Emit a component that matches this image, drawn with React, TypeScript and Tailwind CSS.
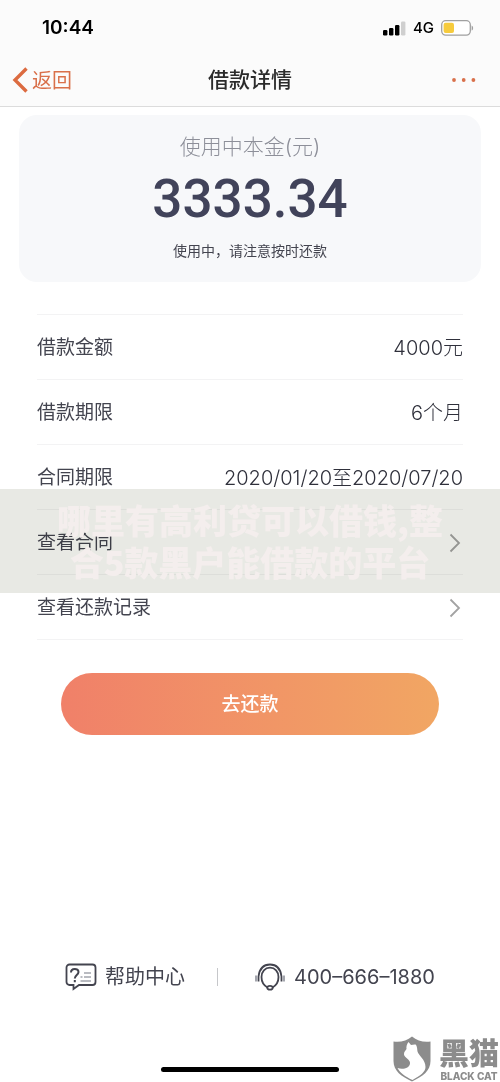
import type { ReactNode } from "react";

const Chevron = () => (
  <svg className="mr-0.5" width="12" height="20" viewBox="0 0 12 20" fill="none" stroke="#a3a3a3" strokeWidth="1.800" aria-hidden="true">
    <path d="M1.500 1.500l8.500 8.500-8.500 8.500" />
  </svg>
);

function Row({ label, children }: { label: string; children: ReactNode }) {
  return (
    <li className="flex h-[65px] items-center justify-between border-b border-[#f3f3f4] pt-0.5">
      <span>{label}</span>
      <span className="text-[20px] font-light text-[#2f303b]">{children}</span>
    </li>
  );
}

function LinkRow({ label }: { label: string }) {
  return (
    <li className="border-b border-[#f3f3f4]">
      <a href="#" className="flex h-16 items-center justify-between pt-0.5">
        <span>{label}</span>
        <Chevron />
      </a>
    </li>
  );
}

function StatusBar() {
  return (
    <div className="flex h-[54px] items-center justify-between pr-[26px] pl-[42px] text-black">
      <span className="pt-0.5 text-[19px] font-semibold">10:44</span>
      <div className="flex items-center gap-[7px] pt-0.5">
        <svg width="23" height="15" viewBox="0 0 23 15" aria-hidden="true">
          <rect x="0" y="9" width="4.4" height="5.5" rx="1.2" />
          <rect x="6" y="7" width="4.4" height="7.5" rx="1.2" />
          <rect x="12" y="4" width="4.4" height="10.5" rx="1.2" />
          <rect x="18" y="0.5" width="4.4" height="14" rx="1.2" fill="#cfcfcf" />
        </svg>
        <span className="text-[15px] font-medium">4G</span>
        <svg width="33" height="16" viewBox="0 0 33 16" aria-hidden="true">
          <rect x="0.7" y="0.7" width="28.6" height="14.4" rx="4" fill="#fff" stroke="#a0a0a0" strokeWidth="1.3" />
          <rect x="2.6" y="2.8" width="10.4" height="10.2" rx="2" fill="#f6cb3d" />
          <path d="M30.6 5.4c2 .8 2 4.400 0 5.200z" fill="#a0a0a0" />
        </svg>
      </div>
    </div>
  );
}

function BlackCat() {
  return (
    <div className="absolute right-0 bottom-0 flex items-center gap-2 pr-px text-[#8c8c8c]">
      <svg width="38" height="46" viewBox="0 0 38 46" aria-hidden="true">
        <path d="M19 .5C14 5 7 6.500.5 5.500V25c0 10 8 15.500 18.500 20.500C29.500 40.500 37.500 35 37.500 25V5.500C31 6.500 24 5 19 .5z" fill="#8c8c8c" />
        <path d="M15.500 6l2.500 3c2-.2 3.500-.8 5-.2 1.500 3 1 4.500 1.500 6.700 1 4 8 8 8 15.500 0 5-5 8.500-13 13C12 40.500 7 37 4.500 32c5.500 2 12 0 12.500-4.500.5-4-5.500-5.500-6-9-.3-2.500 1.500-3.500 2.500-5.500-.5-2.500.5-5 2-7z" fill="#fff" />
      </svg>
      <div className="flex flex-col items-center">
        <span className="text-[30px] leading-[34px] font-black">黑猫</span>
        <span className="font-['Inter'] text-[10px] leading-3 font-extrabold">BLACK CAT</span>
      </div>
    </div>
  );
}

export default function App() {
  return (
    <div className="relative flex min-h-screen flex-col bg-white font-['Inter','Noto_Sans_CJK_SC',sans-serif] text-[#43444f]">
      <header className="border-b border-[#dcdcdc] bg-[#fbfbfb]">
        <StatusBar />
        <div className="grid h-[52px] grid-cols-3 items-center px-3">
          <a href="#" className="flex items-center gap-1 text-[20px] text-[#d9704a]">
            <svg width="16" height="26" viewBox="0 0 16 26" fill="none" stroke="#dc6b40" strokeWidth="3.4" aria-hidden="true">
              <path d="M14.500 1.500L3 13l11.500 11.500" />
            </svg>
            <span className="pt-0.5">返回</span>
          </a>
          <h1 className="text-center text-[21px] font-medium text-[#2b2b2b]">借款详情</h1>
          <button type="button" aria-label="更多" className="flex justify-end pr-3">
            <svg width="24" height="6" viewBox="0 0 24 6" fill="#d9704a" aria-hidden="true">
              <circle cx="2" cy="3" r="1.900" />
              <circle cx="11.700" cy="3" r="1.900" />
              <circle cx="21.400" cy="3" r="1.900" />
            </svg>
          </button>
        </div>
      </header>

      <section className="mx-[19px] mt-2 flex h-[167px] flex-col items-center rounded-[18px] bg-[#f7f8fa] pt-4">
        <h2 className="text-[21px] leading-8 font-light text-[#8d8f99]">使用中本金(元)</h2>
        <p className="mt-2 font-['Roboto',sans-serif] text-[53px] leading-[56px] font-medium text-[#41435a]">3333.34</p>
        <p className="mt-3 text-[14px] leading-6">使用中，请注意按时还款</p>
      </section>

      <section className="relative mt-8 px-[37px] text-[19px]">
        <ul className="border-t border-[#f3f3f4]">
          <Row label="借款金额">4000元</Row>
          <Row label="借款期限">6个月</Row>
          <Row label="合同期限">2020/01/20至2020/07/20</Row>
          <LinkRow label="查看合同" />
          <LinkRow label="查看还款记录" />
        </ul>
        <div className="pointer-events-none absolute inset-x-0 top-[175px] h-[104px] bg-[#e8e9e4] mix-blend-multiply" />
        <p className="pointer-events-none absolute inset-x-0 top-[175px] flex h-[104px] items-center justify-center px-[50px] text-center font-['Noto_Sans_CJK_SC',sans-serif] text-[34px] leading-[42px] font-black text-[#f4eeed]">
          哪里有高利贷可以借钱,整合5款黑户能借款的平台
        </p>
      </section>

      <button
        type="button"
        className="mx-[61px] mt-[33px] h-[62px] rounded-full bg-linear-to-r from-[#f08069] to-[#f1a663] pt-0.5 text-[19px] font-medium text-white"
      >
        去还款
      </button>

      <footer className="mt-auto flex items-center justify-center pb-[90px] text-[20px]">
        <a href="#" className="flex items-center gap-2">
          <svg width="32" height="28" viewBox="0 0 32 28" fill="none" stroke="#43444f" strokeWidth="1.800" aria-hidden="true">
            <path d="M4.500 1.500h23a3 3 0 0 1 3 3v14.500a3 3 0 0 1-3 3H14l-5.500 4v-4h-4a3 3 0 0 1-3-3V4.500a3 3 0 0 1 3-3z" />
            <path d="M6 9.500c0-4.800 7.500-4.600 7.500-.5 0 3-3.700 3-3.700 6.500M9.800 17v2.200" strokeWidth="2" />
            <path d="M19 10h7M15.500 14h2M19 14h7M15.500 18h10.500" stroke="#a3a5ad" strokeWidth="1.500" />
          </svg>
          帮助中心
        </a>
        <span className="mr-9 ml-8 h-[18px] w-px bg-[#c6c7ca]" />
        <a href="tel:400-666-1880" className="flex items-center gap-2">
          <svg width="32" height="28" viewBox="0 0 32 28" fill="none" stroke="#43444f" strokeWidth="1.800" aria-hidden="true">
            <path d="M2 12.500v6M30 12.500v6" stroke="#a3a5ad" strokeWidth="2" />
            <path d="M4.500 18.500v-5C5.500 5.500 10 1.500 16 1.500s10.500 4 11.500 12v5" />
            <path d="M13.500 24.500C10 22.500 7.500 19 7.500 14c0-5.500 3.500-9.300 8.500-9.300s8.500 3.800 8.500 9.300c0 5-2.500 8.500-6 10.500" />
            <ellipse cx="16" cy="24.800" rx="2.700" ry="1.900" />
          </svg>
          400–666–1880
        </a>
      </footer>

      <div className="absolute bottom-[10px] left-1/2 h-[5px] w-[178px] -translate-x-1/2 rounded-full bg-black" />
      <BlackCat />
    </div>
  );
}
